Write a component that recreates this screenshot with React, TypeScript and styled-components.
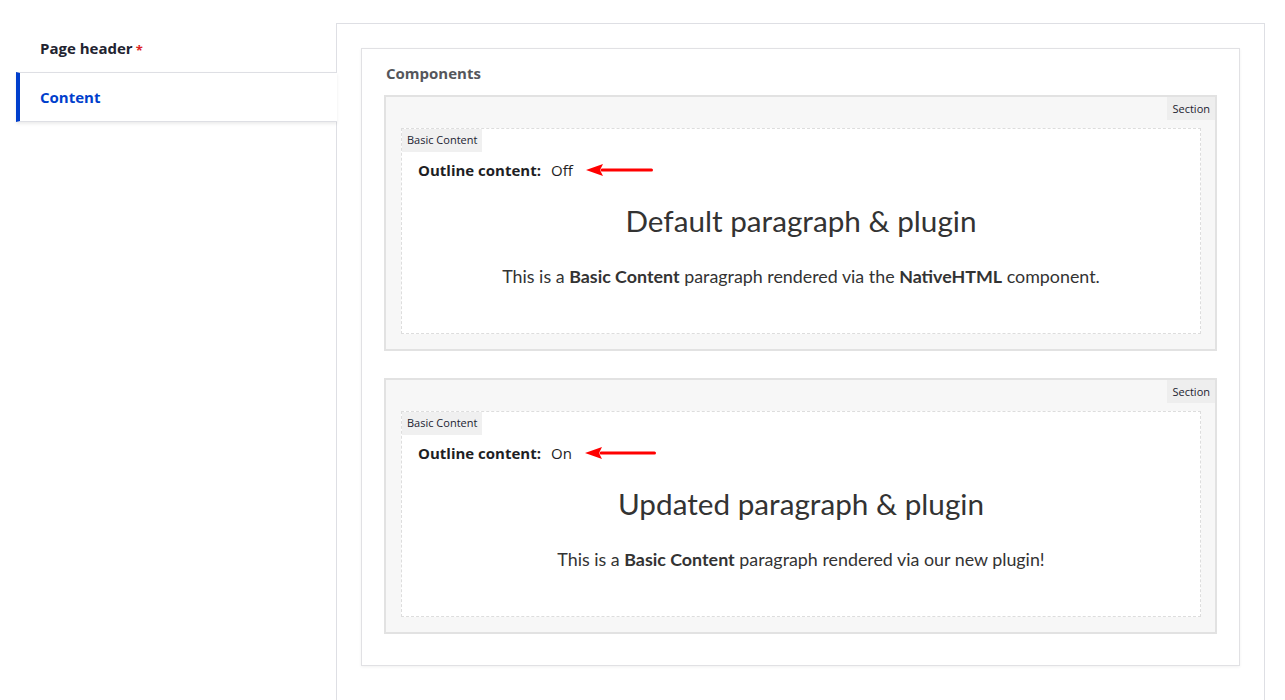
import styled, { createGlobalStyle } from 'styled-components';

const GlobalStyle = createGlobalStyle`
  html, body {
    margin: 0;
    background: #fff;
    font-family: "Open Sans", "Noto Sans", sans-serif;
    color: #222330;
  }
`;

const Page = styled.div`
  display: flex;
  align-items: flex-start;
  padding: 23px 20px 0 16px;
  min-height: 677px;
`;

const Nav = styled.ul`
  list-style: none;
  margin: 0 -1px 0 0;
  padding: 1px 0 0;
  width: 321px;
  flex: none;
  position: relative;
  z-index: 1;
`;

const NavItem = styled.li<{ $active?: boolean }>`
  height: 48px;
  display: flex;
  align-items: center;
  padding-left: 20px;
  font-size: 15px;
  font-weight: 700;
  color: ${(p) => (p.$active ? '#003ecc' : '#222330')};
  background: ${(p) => (p.$active ? '#fff' : 'transparent')};
  border-left: 4px solid ${(p) => (p.$active ? '#003ecc' : 'transparent')};
  border-top: 1px solid ${(p) => (p.$active ? '#dedfe4' : 'transparent')};
  border-bottom: 1px solid ${(p) => (p.$active ? '#dedfe4' : 'transparent')};
  box-shadow: ${(p) => (p.$active ? '0 2px 3px rgba(0, 0, 0, 0.08)' : 'none')};
  &:first-child {
    height: 47px;
    border-top: none;
  }
`;

const Required = styled.span`
  color: #dc2323;
  margin-left: 3px;
  font-size: 13px;
  align-self: flex-start;
  margin-top: 17px;
`;

const Panel = styled.div`
  flex: 1;
  border: 1px solid #dedfe4;
  border-bottom: none;
  padding: 24px 24px 40px;
  min-height: 640px;
`;

const Card = styled.div`
  border: 1px solid #e1e1e4;
  box-shadow: 0 1px 3px rgba(0, 0, 0, 0.06);
  padding: 14px 22px 31px;
`;

const Heading = styled.h3`
  margin: 0 0 12px;
  padding-left: 2px;
  font-size: 15px;
  line-height: 20px;
  font-weight: 700;
  color: #55565b;
`;

const Section = styled.div`
  position: relative;
  border: 2px solid #e2e2e2;
  background: #f7f7f7;
  padding: 31px 14px 15px 15px;
  & + & {
    margin-top: 27px;
  }
`;

const SectionLabel = styled.span`
  position: absolute;
  top: 0;
  right: 0;
  height: 23px;
  line-height: 23px;
  padding: 0 5px;
  background: #eee;
  font-size: 11px;
  color: #222330;
`;

const Block = styled.div`
  border: 1px dashed #ddd;
  background: #fff;
  padding-bottom: 44px;
`;

const BlockLabel = styled.div`
  width: fit-content;
  height: 23px;
  line-height: 22px;
  padding: 0 5px;
  background: #f0f0f0;
  font-size: 11px;
  color: #222330;
`;

const OutlineRow = styled.div`
  display: flex;
  align-items: center;
  margin: 6px 0 0 16px;
  height: 24px;
  font-size: 15px;
  color: #1e1e24;
  strong {
    margin-right: 10px;
  }
`;

const Arrow = styled.svg`
  margin-left: 13px;
`;

const Title = styled.h2`
  margin: 21px 0 0;
  text-align: center;
  font-family: Lato, sans-serif;
  font-weight: 400;
  font-size: 29.7px;
  line-height: 36px;
  color: #333;
`;

const Text = styled.p`
  margin: 24px 0 0;
  text-align: center;
  font-family: Lato, sans-serif;
  font-size: 17.85px;
  line-height: 26px;
  color: #333;
  strong {
    font-weight: 700;
  }
`;

const RedArrow = ({ width }: { width: number }) => (
  <Arrow width={width} height={14} viewBox={`0 0 ${width} 14`}>
    <path d={`M16 7 H${width - 1.5}`} stroke="#f00" strokeWidth="3" strokeLinecap="round" />
    <path d="M0 7 L17 1 L14 7 L17 13 Z" fill="#f00" />
  </Arrow>
);

const samples = [
  {
    state: 'Off',
    arrow: 67,
    title: 'Default paragraph & plugin',
    text: (
      <>
        This is a <strong>Basic Content</strong> paragraph rendered via the <strong>NativeHTML</strong> component.
      </>
    ),
  },
  {
    state: 'On',
    arrow: 71,
    title: 'Updated paragraph & plugin',
    text: (
      <>
        This is a <strong>Basic Content</strong> paragraph rendered via our new plugin!
      </>
    ),
  },
];

export default function App() {
  return (
    <>
      <GlobalStyle />
      <Page>
        <Nav>
          <NavItem>
            Page header<Required>*</Required>
          </NavItem>
          <NavItem $active>Content</NavItem>
        </Nav>
        <Panel>
          <Card>
            <Heading>Components</Heading>
            {samples.map((s) => (
              <Section key={s.state}>
                <SectionLabel>Section</SectionLabel>
                <Block>
                  <BlockLabel>Basic Content</BlockLabel>
                  <OutlineRow>
                    <strong>Outline content:</strong>
                    {s.state}
                    <RedArrow width={s.arrow} />
                  </OutlineRow>
                  <Title>{s.title}</Title>
                  <Text>{s.text}</Text>
                </Block>
              </Section>
            ))}
          </Card>
        </Panel>
      </Page>
    </>
  );
}
